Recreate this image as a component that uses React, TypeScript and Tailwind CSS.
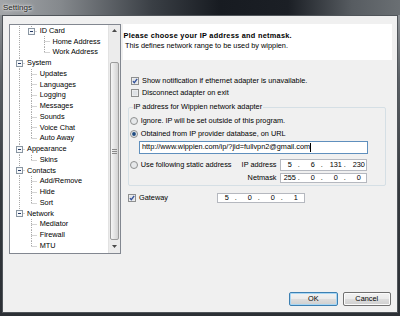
import type { ReactNode } from 'react';

type TreeNode = { label: string; level: number; box?: boolean; last?: boolean; cont?: boolean[] };

const ROW_H = 10.75;
const COL_W = 12.7;
const X0 = 8.7;

const nodes: TreeNode[] = [
  { label: 'ID Card', level: 1, box: true, last: true, cont: [true] },
  { label: 'Home Address', level: 2, cont: [true, false] },
  { label: 'Work Address', level: 2, last: true, cont: [true, false] },
  { label: 'System', level: 0, box: true },
  { label: 'Updates', level: 1, cont: [true] },
  { label: 'Languages', level: 1, cont: [true] },
  { label: 'Logging', level: 1, cont: [true] },
  { label: 'Messages', level: 1, cont: [true] },
  { label: 'Sounds', level: 1, cont: [true] },
  { label: 'Voice Chat', level: 1, cont: [true] },
  { label: 'Auto Away', level: 1, last: true, cont: [true] },
  { label: 'Appearance', level: 0, box: true },
  { label: 'Skins', level: 1, last: true, cont: [true] },
  { label: 'Contacts', level: 0, box: true },
  { label: 'Add/Remove', level: 1, cont: [true] },
  { label: 'Hide', level: 1, cont: [true] },
  { label: 'Sort', level: 1, last: true, cont: [true] },
  { label: 'Network', level: 0, box: true, last: true },
  { label: 'Mediator', level: 1, cont: [false] },
  { label: 'Firewall', level: 1, cont: [false] },
  { label: 'MTU', level: 1, last: true, cont: [false] },
];

const DOT = '#a9a9a9';

function TreeRow({ node }: { node: TreeNode }) {
  const cx = (l: number) => Math.round(X0 + l * COL_W) + 0.5;
  const w = X0 + node.level * COL_W + 8.3;
  const mid = 5.5;
  const x = cx(node.level);
  return (
    <div className="flex items-center h-[10.75px] whitespace-nowrap">
      <svg width={w} height={ROW_H} className="shrink-0">
        {node.cont?.map((c, a) =>
          c ? <line key={a} x1={cx(a)} x2={cx(a)} y1={0} y2={ROW_H} stroke={DOT} strokeDasharray="1 1" /> : null
        )}
        <line x1={x} x2={x} y1={0} y2={node.last ? mid : ROW_H} stroke={DOT} strokeDasharray="1 1" />
        <line x1={x} x2={x + 5} y1={mid} y2={mid} stroke={DOT} strokeDasharray="1 1" />
        {node.box && (
          <g>
            <rect x={x - 3} y={mid - 3} width={6} height={6} fill="#f7f9fb" stroke="#8a96a2" />
            <line x1={x - 1.5} x2={x + 1.5} y1={mid} y2={mid} stroke="#243a66" />
          </g>
        )}
      </svg>
      <span>{node.label}</span>
    </div>
  );
}

function Tree() {
  return (
    <div className="w-[112px] h-[230px] shrink-0 flex border border-[#828790] bg-white">
      <div className="flex-1 overflow-hidden pt-[0.6px]">
        {nodes.map(n => (
          <TreeRow key={n.label} node={n} />
        ))}
      </div>
      {/* scrollbar */}
      <div className="w-[12px] flex flex-col bg-[#ececec] border-l border-[#e2e2e2]">
        <div className="h-[11px] flex items-center justify-center">
          <svg width="5" height="3"><path d="M0 3 L2.5 0 L5 3 Z" fill="#4a4a4a" /></svg>
        </div>
        <div className="h-[26px]" />
        <div className="h-[178px] mx-[1px] rounded-[2px] border border-[#9c9c9c] bg-[linear-gradient(90deg,#f6f6f6,#e4e4e4_50%,#d3d3d3)] flex items-center justify-center">
          <svg width="5" height="5">
            <line x1="0" x2="5" y1="0.5" y2="0.5" stroke="#8a8a8a" />
            <line x1="0" x2="5" y1="2.5" y2="2.5" stroke="#8a8a8a" />
            <line x1="0" x2="5" y1="4.5" y2="4.5" stroke="#8a8a8a" />
          </svg>
        </div>
        <div className="flex-1 flex items-center justify-center">
          <svg width="5" height="3"><path d="M0 0 L2.5 3 L5 0 Z" fill="#4a4a4a" /></svg>
        </div>
      </div>
    </div>
  );
}

function Check({ checked }: { checked?: boolean }) {
  return (
    <svg width="8" height="8" viewBox="0 0 8 8" className="shrink-0">
      <rect x="0.5" y="0.5" width="7" height="7" fill="#f5f5f5" stroke="#8e8f8f" />
      <rect x="1.5" y="1.5" width="5" height="5" fill="#dfe2e6" />
      {checked && <path d="M1.9 4.1 L3.3 5.7 L6.2 1.9" fill="none" stroke="#33519a" strokeWidth="1.3" />}
    </svg>
  );
}

function Radio({ on }: { on?: boolean }) {
  return (
    <svg width="8" height="8" viewBox="0 0 8 8" className="shrink-0">
      <circle cx="4" cy="4" r="3.5" fill="#e6e8ea" stroke="#8e8f8f" />
      {on && <circle cx="4" cy="4" r="1.9" fill="#1d4a80" />}
    </svg>
  );
}

function IpField({ parts, className }: { parts: string[]; className: string }) {
  return (
    <div className={`flex items-center bg-white border border-[#b5b8bf] pl-[1px] ${className}`}>
      {parts.map((p, i) => (
        <div key={i} className="flex">
          <span className="w-[16px] text-center">{p}</span>
          {i < 3 && <span className="w-[7px] text-left">.</span>}
        </div>
      ))}
    </div>
  );
}

function Panel() {
  return (
    <div className="ml-[2px] w-[269px] flex flex-col">
      <div className="h-[36px] bg-white pt-[6.7px] whitespace-nowrap">
        <div className="h-[10px] pl-[0.5px] font-bold tracking-[0.28px]">Please choose your IP address and netmask.</div>
        <div className="h-[10px] pl-[2px]">This defines network range to be used by wippien.</div>
      </div>

      <div className="mt-[14.4px] h-[12.6px] flex items-center pl-[8px] gap-[3px]">
        <Check checked />
        <span>Show notification if ethernet adapter is unavailable.</span>
      </div>
      <div className="h-[12.6px] flex items-center pl-[8px] gap-[3px]">
        <Check />
        <span>Disconnect adapter on exit</span>
      </div>

      {/* group box */}
      <div className="relative mt-[7.4px] ml-[4.5px] w-[258px] h-[79px] border border-[#d5dfe5] rounded-[2px] pt-[6px]">
        <span className="absolute left-[4px] top-[-6px] bg-[#f0f0f0] px-[1px] leading-[10px]">
          IP address for Wippien network adapter
        </span>
        <div className="h-[13.6px] flex items-center pl-[1px] gap-[3.2px]">
          <Radio />
          <span>Ignore. IP will be set outside of this program.</span>
        </div>
        <div className="h-[13.6px] flex items-center pl-[1px] gap-[3.2px]">
          <Radio on />
          <span>Obtained from IP provider database, on URL</span>
        </div>
        <div className="ml-[10.5px] w-[229.3px] h-[12.6px] flex items-center bg-white border border-[#5f8fbd] pl-[2px]">
          <span>http://www.wippien.com/ip/?jid=fullvpn2@gmail.com</span>
          <span className="inline-block w-[1px] h-[9px] bg-black" />
        </div>
        <div className="mt-[5.5px] h-[11.4px] flex items-center pl-[1px] pr-[17.3px]">
          <Radio />
          <span className="ml-[3.2px]">Use following static address</span>
          <span className="ml-auto mr-[3.3px]">IP address</span>
          <IpField parts={['5', '6', '131', '230']} className="w-[87.4px] h-[11.4px]" />
        </div>
        <div className="mt-[2px] h-[10.4px] flex items-center justify-end pr-[17.3px]">
          <span className="mr-[3.3px]">Netmask</span>
          <IpField parts={['255', '0', '0', '0']} className="w-[87.4px] h-[10.4px]" />
        </div>
      </div>

      <div className="mt-[5.7px] h-[12px] flex items-center pl-[5px]">
        <Check checked />
        <span className="ml-[3px] w-[77.7px]">Gateway</span>
        <IpField parts={['5', '0', '0', '1']} className="w-[88.3px] h-[10px]" />
      </div>
    </div>
  );
}

function Button({ children, primary }: { children: ReactNode; primary?: boolean }) {
  return (
    <div
      className={`w-[48.5px] h-[14.3px] flex items-center justify-center rounded-[2px] border bg-[linear-gradient(180deg,#f2f2f2_0%,#ebebeb_48%,#dddddd_52%,#cfcfcf_100%)] ${
        primary ? 'border-[#3c7fb1] shadow-[inset_0_0_0_1px_#a7d6f4]' : 'border-[#707070] shadow-[inset_0_0_0_1px_#fbfbfb]'
      }`}
    >
      {children}
    </div>
  );
}

export default function App() {
  return (
    <div className="w-[400px] h-[316px] flex flex-col overflow-hidden bg-[linear-gradient(180deg,#9a9ea2_0%,#5b6065_25%,#35393e_60%,#2c3035_100%)] font-['Liberation_Sans',Arial,sans-serif] text-black">
      <div className="h-[15px] shrink-0 flex items-center pl-[3px] bg-[linear-gradient(90deg,#a3a6a9_0%,#85898d_15%,#3a3f45_38%,#171b21_55%,#1b1f25_72%,#575c61_88%,#6a6f73_100%)]">
        <span className="text-[8px] leading-[10px] text-[#1c1c1c] [text-shadow:0_0_4px_#ffffff,0_0_2px_#ffffff]">Settings</span>
      </div>
      <div className="mx-[2px] h-[298px] shrink-0 flex flex-col border border-[#50555a] bg-[#f0f0f0] text-[7.33px] leading-[10px]">
        <div className="flex pt-[8px] pl-[6px]">
          <Tree />
          <Panel />
        </div>
        <div className="mt-[38px] flex justify-end gap-[5px] pr-[6px]">
          <Button primary>OK</Button>
          <Button>Cancel</Button>
        </div>
      </div>
    </div>
  );
}
